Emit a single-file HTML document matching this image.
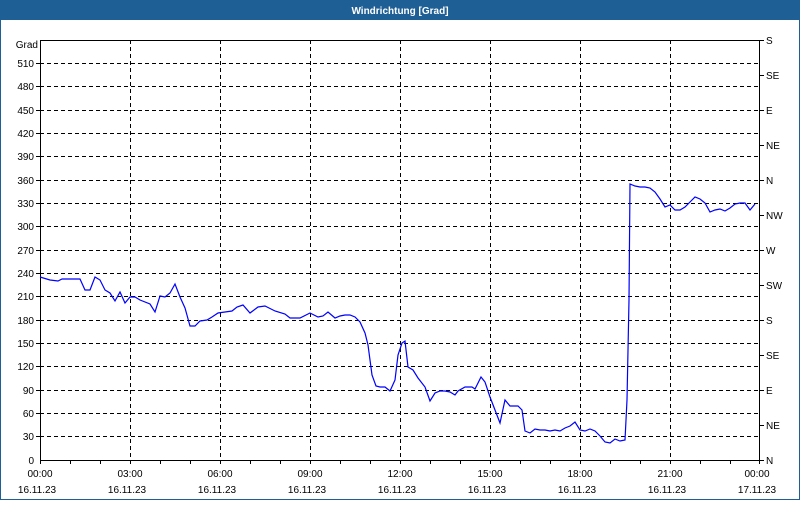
<!DOCTYPE html>
<html><head><style>
body{margin:0;width:800px;height:500px;overflow:hidden;background:#fff;font-family:"Liberation Sans",sans-serif}
</style></head><body>
<svg width="800" height="500" xmlns="http://www.w3.org/2000/svg" font-family="Liberation Sans, sans-serif" font-size="10">
<rect x="0" y="0" width="800" height="500" fill="#fff"/>
<rect x="0.5" y="0.5" width="799" height="499" fill="none" stroke="#1e5f96"/>
<rect x="0" y="0" width="800" height="20" fill="#1e5f96"/>
<text x="400" y="14" fill="#fff" font-weight="bold" text-anchor="middle">Windrichtung [Grad]</text>
<g stroke="#000" stroke-dasharray="4,3" stroke-width="1">
<line x1="40" y1="63.5" x2="760" y2="63.5"/><line x1="40" y1="86.5" x2="760" y2="86.5"/><line x1="40" y1="110.5" x2="760" y2="110.5"/><line x1="40" y1="133.5" x2="760" y2="133.5"/><line x1="40" y1="156.5" x2="760" y2="156.5"/><line x1="40" y1="180.5" x2="760" y2="180.5"/><line x1="40" y1="203.5" x2="760" y2="203.5"/><line x1="40" y1="226.5" x2="760" y2="226.5"/><line x1="40" y1="250.5" x2="760" y2="250.5"/><line x1="40" y1="273.5" x2="760" y2="273.5"/><line x1="40" y1="296.5" x2="760" y2="296.5"/><line x1="40" y1="320.5" x2="760" y2="320.5"/><line x1="40" y1="343.5" x2="760" y2="343.5"/><line x1="40" y1="366.5" x2="760" y2="366.5"/><line x1="40" y1="390.5" x2="760" y2="390.5"/><line x1="40" y1="413.5" x2="760" y2="413.5"/><line x1="40" y1="436.5" x2="760" y2="436.5"/>
<line x1="130.5" y1="40" x2="130.5" y2="460"/><line x1="220.5" y1="40" x2="220.5" y2="460"/><line x1="310.5" y1="40" x2="310.5" y2="460"/><line x1="400.5" y1="40" x2="400.5" y2="460"/><line x1="490.5" y1="40" x2="490.5" y2="460"/><line x1="580.5" y1="40" x2="580.5" y2="460"/><line x1="670.5" y1="40" x2="670.5" y2="460"/>
</g>
<rect x="40.5" y="40.5" width="719" height="420" fill="none" stroke="#000"/>
<g stroke="#000">
<line x1="36" y1="63.5" x2="40" y2="63.5"/><line x1="36" y1="86.5" x2="40" y2="86.5"/><line x1="36" y1="110.5" x2="40" y2="110.5"/><line x1="36" y1="133.5" x2="40" y2="133.5"/><line x1="36" y1="156.5" x2="40" y2="156.5"/><line x1="36" y1="180.5" x2="40" y2="180.5"/><line x1="36" y1="203.5" x2="40" y2="203.5"/><line x1="36" y1="226.5" x2="40" y2="226.5"/><line x1="36" y1="250.5" x2="40" y2="250.5"/><line x1="36" y1="273.5" x2="40" y2="273.5"/><line x1="36" y1="296.5" x2="40" y2="296.5"/><line x1="36" y1="320.5" x2="40" y2="320.5"/><line x1="36" y1="343.5" x2="40" y2="343.5"/><line x1="36" y1="366.5" x2="40" y2="366.5"/><line x1="36" y1="390.5" x2="40" y2="390.5"/><line x1="36" y1="413.5" x2="40" y2="413.5"/><line x1="36" y1="436.5" x2="40" y2="436.5"/>
<line x1="760" y1="40.5" x2="764" y2="40.5"/><line x1="760" y1="75.5" x2="764" y2="75.5"/><line x1="760" y1="110.5" x2="764" y2="110.5"/><line x1="760" y1="145.5" x2="764" y2="145.5"/><line x1="760" y1="180.5" x2="764" y2="180.5"/><line x1="760" y1="215.5" x2="764" y2="215.5"/><line x1="760" y1="250.5" x2="764" y2="250.5"/><line x1="760" y1="285.5" x2="764" y2="285.5"/><line x1="760" y1="320.5" x2="764" y2="320.5"/><line x1="760" y1="355.5" x2="764" y2="355.5"/><line x1="760" y1="390.5" x2="764" y2="390.5"/><line x1="760" y1="425.5" x2="764" y2="425.5"/><line x1="760" y1="460.5" x2="764" y2="460.5"/>
<path d="M40.5 460v4M70.5 460v4M100.5 460v4M130.5 460v4M160.5 460v4M190.5 460v4M220.5 460v4M250.5 460v4M280.5 460v4M310.5 460v4M340.5 460v4M370.5 460v4M400.5 460v4M430.5 460v4M460.5 460v4M490.5 460v4M520.5 460v4M550.5 460v4M580.5 460v4M610.5 460v4M640.5 460v4M670.5 460v4M700.5 460v4M730.5 460v4M759.5 460v4"/>
</g>
<g text-anchor="end" fill="#000">
<text x="38" y="48">Grad</text>
<text x="34" y="67">510</text><text x="34" y="90">480</text><text x="34" y="114">450</text><text x="34" y="137">420</text><text x="34" y="160">390</text><text x="34" y="184">360</text><text x="34" y="207">330</text><text x="34" y="230">300</text><text x="34" y="254">270</text><text x="34" y="277">240</text><text x="34" y="300">210</text><text x="34" y="324">180</text><text x="34" y="347">150</text><text x="34" y="370">120</text><text x="34" y="394">90</text><text x="34" y="417">60</text><text x="34" y="440">30</text><text x="34" y="464">0</text>
</g>
<g fill="#000">
<text x="766" y="44">S</text><text x="766" y="79">SE</text><text x="766" y="114">E</text><text x="766" y="149">NE</text><text x="766" y="184">N</text><text x="766" y="219">NW</text><text x="766" y="254">W</text><text x="766" y="289">SW</text><text x="766" y="324">S</text><text x="766" y="359">SE</text><text x="766" y="394">E</text><text x="766" y="429">NE</text><text x="766" y="464">N</text>
</g>
<g text-anchor="middle" fill="#000">
<text x="40" y="477">00:00</text><text x="130" y="477">03:00</text><text x="220" y="477">06:00</text><text x="310" y="477">09:00</text><text x="400" y="477">12:00</text><text x="490" y="477">15:00</text><text x="580" y="477">18:00</text><text x="670" y="477">21:00</text><text x="757" y="477">00:00</text>
<text x="37" y="493">16.11.23</text><text x="127" y="493">16.11.23</text><text x="217" y="493">16.11.23</text><text x="307" y="493">16.11.23</text><text x="397" y="493">16.11.23</text><text x="487" y="493">16.11.23</text><text x="577" y="493">16.11.23</text><text x="667" y="493">16.11.23</text><text x="757" y="493">17.11.23</text>
</g>
<polyline fill="none" stroke="#0000ff" stroke-width="1.2" points="40,277 50,280 58,281 62,279 80,279 85,290 90,290 95,277 100,280 105,290 110,293 115,301 120,292 125,303 130,297 135,297 140,300 150,304 155,312 160,296 165,297 170,293 175,284 180,297 185,308 190,326 195,326 200,321 207,320 212,317 218,313 225,312 232,311 237,307 243,305 250,313 258,307 265,306 275,311 285,314 290,318 300,318 310,313 318,317 323,316 328,312 335,318 340,316 345,315 350,315 355,317 360,322 365,333 368,345 372,375 376,386 380,387 385,387 390,391 395,380 398,355 402,343 405,341 408,367 413,370 418,378 425,387 430,401 435,393 440,391 445,391 450,392 455,395 458,391 465,387 472,387 475,389 481,377 485,382 490,397 495,410 500,423 505,400 510,406 518,406 522,410 525,431 530,433 535,429 540,430 545,430 550,431 555,430 560,431 565,428 570,426 575,422 580,430 585,431 590,429 595,431 600,436 605,442 610,443 615,439 620,441 625,440 627,400 629,300 630,184 635,186 640,187 645,187 650,188 655,192 660,199 665,207 670,205 675,210 680,210 685,207 690,202 695,197 700,199 705,203 710,212 715,210 720,209 725,211 730,208 735,204 740,203 745,203 750,210 755,204"/>
</svg>
</body></html>
